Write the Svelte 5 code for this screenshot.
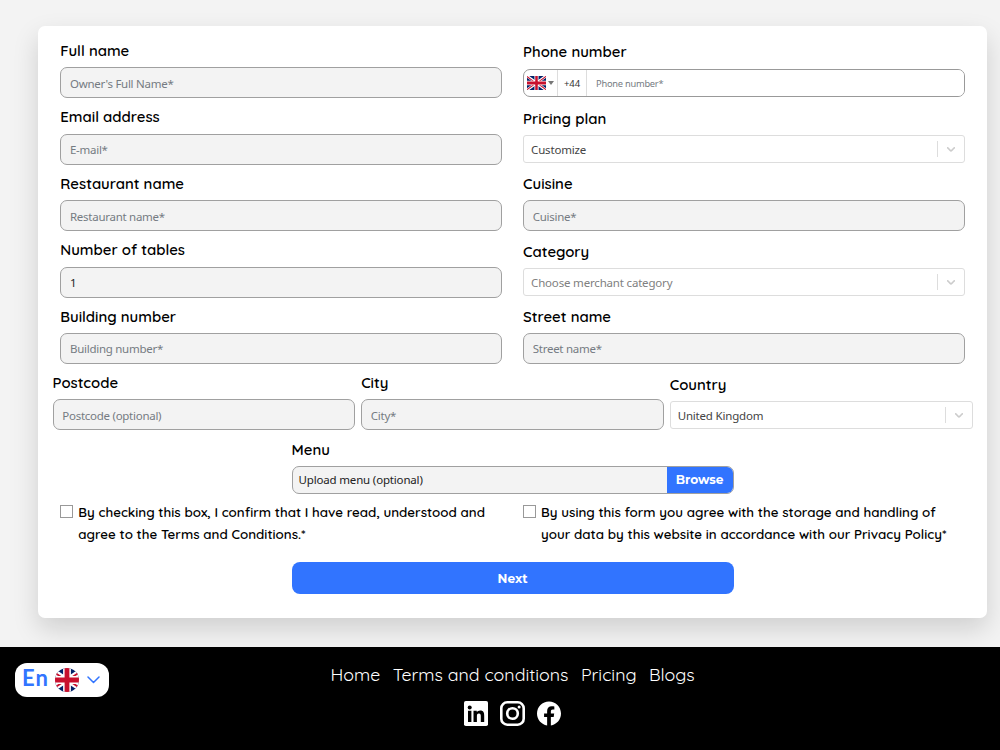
<script>
  const rows = [
    [
      { label: 'Full name', placeholder: "Owner's Full Name*" },
      { label: 'Phone number', placeholder: 'Phone number*', type: 'phone' }
    ],
    [
      { label: 'Email address', placeholder: 'E-mail*' },
      { label: 'Pricing plan', value: 'Customize', type: 'select' }
    ],
    [
      { label: 'Restaurant name', placeholder: 'Restaurant name*' },
      { label: 'Cuisine', placeholder: 'Cuisine*' }
    ],
    [
      { label: 'Number of tables', value: '1' },
      { label: 'Category', placeholder: 'Choose merchant category', type: 'select' }
    ],
    [
      { label: 'Building number', placeholder: 'Building number*' },
      { label: 'Street name', placeholder: 'Street name*' }
    ],
    [
      { label: 'Postcode', placeholder: 'Postcode (optional)' },
      { label: 'City', placeholder: 'City*' },
      { label: 'Country', value: 'United Kingdom', type: 'select' }
    ]
  ];

  const links = ['Home', 'Terms and conditions', 'Pricing', 'Blogs'];
</script>

{#snippet flag()}
  <path fill="#012169" d="M0 0h60v40H0z" />
  <path stroke="#fff" stroke-width="8" d="M0 0l60 40M60 0L0 40" />
  <path stroke="#c8102e" stroke-width="3" d="M0 1.5l26 17.3M34 21.5l26 17.5M60 1L34 18.5M26 21.5L0 39" />
  <path stroke="#fff" stroke-width="13" d="M30 0v40M0 20h60" />
  <path stroke="#c8102e" stroke-width="8" d="M30 0v40M0 20h60" />
{/snippet}

<main>
  <form class="card">
    {#each rows as row}
      <div class="row" class:thirds={row.length === 3}>
        {#each row as field}
          <label class="field">
            <span class="label">{field.label}</span>
            {#if field.type === 'phone'}
              <span class="phone">
                <span class="phone-flag">
                  <svg width="19" height="14" viewBox="0 0 60 40" preserveAspectRatio="none">{@render flag()}</svg>
                  <i class="caret"></i>
                </span>
                <span class="phone-code">+44</span>
                <input placeholder={field.placeholder} />
              </span>
            {:else if field.type === 'select'}
              <span class="select">
                <span class="select-value" class:muted={!field.value}>{field.value ?? field.placeholder}</span>
                <span class="select-arrow">
                  <svg width="14" height="14" viewBox="0 0 20 20" fill="#ccc">
                    <path d="M4.516 7.548c0.436-0.446 1.043-0.481 1.576 0l3.908 3.747 3.908-3.747c0.533-0.481 1.141-0.446 1.574 0 0.436 0.445 0.408 1.197 0 1.615-0.406 0.418-4.695 4.502-4.695 4.502-0.217 0.223-0.502 0.335-0.787 0.335s-0.570-0.112-0.789-0.335c0 0-4.287-4.084-4.695-4.502s-0.436-1.170 0-1.615z" />
                  </svg>
                </span>
              </span>
            {:else}
              <input class="text-input" placeholder={field.placeholder} value={field.value ?? ''} />
            {/if}
          </label>
        {/each}
      </div>
    {/each}

    <div class="menu">
      <span class="label">Menu</span>
      <div class="upload">
        <span class="upload-name">Upload menu (optional)</span>
        <button type="button" class="browse">Browse</button>
      </div>
    </div>

    <div class="consents">
      <label class="consent">
        <input type="checkbox" />
        <span>By checking this box, I confirm that I have read, understood and<br />agree to the Terms and Conditions.*</span>
      </label>
      <label class="consent">
        <input type="checkbox" />
        <span>By using this form you agree with the storage and handling of<br />your data by this website in accordance with our Privacy Policy*</span>
      </label>
    </div>

    <button type="button" class="next">Next</button>
  </form>
</main>

<footer>
  <button class="language">
    <span>En</span>
    <svg class="round-flag" width="24" height="24" viewBox="10 0 40 40">{@render flag()}</svg>
    <svg class="chevron" width="13" height="8" viewBox="0 0 13 8" fill="none" stroke="#3174ff" stroke-width="1.5" stroke-linecap="round" stroke-linejoin="round">
      <path d="M1 1l5.500 5.500L12 1" />
    </svg>
  </button>

  <nav>
    {#each links as link}
      <a href="#top">{link}</a>
    {/each}
  </nav>

  <div class="social">
    <svg width="24" height="25" viewBox="0 0 24 25">
      <rect width="24" height="25" rx="1.8" fill="#fff" />
      <circle cx="5.7" cy="6.4" r="2" />
      <path d="M4 9.800h3.400V21H4zM9.500 9.800h3.300v1.500c.6-1.100 1.800-1.800 3.400-1.800 3.400 0 4 2.200 4 5.200V21h-3.400v-5.600c0-1.400-.1-2.900-1.900-2.900s-2 1.400-2 2.800V21H9.500z" />
    </svg>
    <svg width="25" height="25" viewBox="0 0 25 25" fill="none" stroke="#fff" stroke-width="2.6">
      <rect x="1.3" y="1.3" width="22.4" height="22.4" rx="6" />
      <circle cx="12.5" cy="12.5" r="5.3" />
      <circle cx="19.1" cy="5.9" r="1.5" fill="#fff" stroke="none" />
    </svg>
    <svg width="24" height="25" viewBox="0 0 24 24">
      <path fill="#fff" d="M24 12.070C24 5.400 18.630 0 12 0S0 5.400 0 12.070C0 18.100 4.390 23.100 10.130 24v-8.440H7.080v-3.490h3.050V9.410c0-3.020 1.790-4.690 4.530-4.690 1.310 0 2.680.24 2.680.24v2.970h-1.510c-1.490 0-1.960.93-1.960 1.890v2.250h3.330l-.53 3.490h-2.800V24C19.610 23.100 24 18.100 24 12.070z" />
    </svg>
  </div>
</footer>

<style>
  :global(body) {
    margin: 0;
    background: #f3f3f3;
    font-family: 'Noto Sans', sans-serif;
  }

  * {
    box-sizing: border-box;
  }

  button,
  input {
    border: 0;
    padding: 0;
    outline: 0;
  }

  main {
    height: 647px;
    padding: 25.5px 12.7px 0 37.8px;
    overflow: hidden;
  }

  .card {
    height: 592px;
    padding-top: 14.4px;
    background: #fff;
    border-radius: 7px;
    box-shadow: 0 11px 26px rgba(0, 0, 0, 0.15);
  }

  .row {
    display: flex;
    align-items: center;
    gap: 21px;
    height: 58.4px;
    margin: 0 22.5px 8.05px;
  }

  .row.thirds {
    gap: 5.7px;
    margin: 0 14.8px 8.05px;
  }

  .field {
    flex: 1;
    min-width: 0;
  }

  .label {
    display: block;
    height: 22px;
    margin-bottom: 5.3px;
    line-height: 22.3px;
    font-family: Quicksand, Lato, sans-serif;
    font-size: 14.9px;
    font-weight: 600;
    color: #000;
  }

  .text-input {
    display: block;
    width: 100%;
    height: 31px;
    padding: 1px 8.7px 0;
    border: 1px solid #a0a0a0;
    border-radius: 7px;
    background: #f3f3f3;
    font-family: 'Noto Sans', sans-serif;
    font-size: 11.5px;
    letter-spacing: -0.27px;
    color: #222;
  }

  input::placeholder {
    color: #757b82;
    opacity: 1;
  }

  .phone {
    display: flex;
    height: 28px;
    border: 1px solid #999;
    border-radius: 7px;
    overflow: hidden;
    font-size: 9.5px;
  }

  .phone-flag {
    display: flex;
    align-items: center;
    gap: 2px;
    width: 34px;
    padding-left: 3px;
    border-right: 1px solid #ddd;
  }

  .caret {
    border: 3px solid transparent;
    border-top: 4px solid #777;
    border-bottom: 0;
  }

  .phone-code {
    width: 29px;
    border-right: 1px solid #ddd;
    line-height: 27px;
    text-align: center;
    color: #333;
  }

  .phone input {
    flex: 1;
    padding: 1px 0 0 9px;
    font-family: 'Noto Sans', sans-serif;
    font-size: 9.3px;
    letter-spacing: -0.25px;
  }

  .select {
    display: flex;
    align-items: center;
    height: 28px;
    border: 1px solid #ddd;
    border-radius: 3px;
  }

  .select-value {
    flex: 1;
    padding: 1px 0 0 7px;
    font-size: 11.5px;
    letter-spacing: -0.18px;
    color: #444;
  }

  .select-value.muted {
    color: #808080;
  }

  .select-arrow {
    display: flex;
    align-items: center;
    justify-content: center;
    width: 27px;
    height: 16px;
    border-left: 1px solid #ddd;
  }

  .menu {
    width: 442px;
    margin: 0 auto;
  }

  .upload {
    display: flex;
    height: 28px;
    border: 1px solid #a0a0a0;
    border-radius: 7px;
    overflow: hidden;
    background: #f3f3f3;
  }

  .upload-name {
    flex: 1;
    padding-left: 6px;
    font-size: 11.5px;
    letter-spacing: -0.17px;
    line-height: 25px;
    color: #222;
  }

  .browse,
  .next {
    background: #3174ff;
    color: #fff;
    font-family: Montserrat, Inter, sans-serif;
    font-weight: 700;
  }

  .browse {
    width: 66px;
    font-size: 12.2px;
  }

  .consents {
    display: flex;
    gap: 21px;
    margin: 8.5px 22.5px 0;
  }

  .consent {
    display: flex;
    flex: 1;
    gap: 5px;
    font-family: Quicksand, Lato, sans-serif;
    font-size: 13.35px;
    font-weight: 600;
    line-height: 21.2px;
    white-space: nowrap;
  }

  .consent input {
    appearance: none;
    flex: none;
    width: 13px;
    height: 13px;
    margin: 2.7px 0 0;
    border: 1px solid #999;
    background: #fff;
  }

  .next {
    display: block;
    width: 442px;
    height: 32px;
    margin: 17.4px auto 0;
    border-radius: 8px;
    font-size: 12.2px;
  }

  footer {
    position: relative;
    height: 103px;
    padding-top: 15px;
    background: #000;
  }

  .language {
    position: absolute;
    top: 15.5px;
    left: 15px;
    display: flex;
    align-items: center;
    width: 94px;
    height: 34px;
    padding-left: 7px;
    border-radius: 12px;
    background: #fff;
    color: #3174ff;
    font-family: Lato, sans-serif;
    font-size: 22px;
    font-weight: 700;
    letter-spacing: 1px;
  }

  .language span {
    width: 33px;
    text-align: left;
    line-height: 30px;
    margin-top: -3px;
  }

  .round-flag {
    border-radius: 50%;
  }

  .chevron {
    margin-left: 8px;
  }

  nav {
    display: flex;
    justify-content: center;
    gap: 12.5px;
    padding-left: 25px;
    height: 24px;
    line-height: 24px;
  }

  nav a {
    color: #fff;
    font-family: Quicksand, Lato, sans-serif;
    font-size: 17.8px;
    font-weight: 400;
    text-decoration: none;
  }

  .social {
    display: flex;
    justify-content: center;
    gap: 12px;
    padding-left: 25px;
    margin-top: 15px;
  }
</style>
